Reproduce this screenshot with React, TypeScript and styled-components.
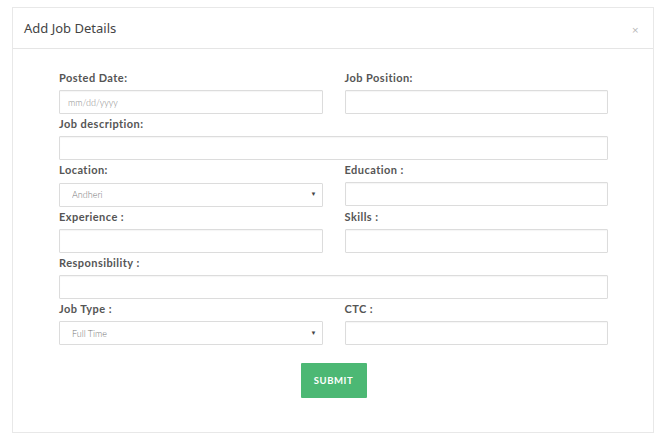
import React from 'react';
import styled, { createGlobalStyle } from 'styled-components';

const GlobalStyle = createGlobalStyle`
  body {
    margin: 0;
    background: #ffffff;
    font-family: 'Lato', 'Open Sans', sans-serif;
  }
`;

type Field = {
  label: string;
  kind?: 'text' | 'select';
  placeholder?: string;
  value?: string;
  wide?: boolean;
};

const fields: Field[] = [
  { label: 'Posted Date:', placeholder: 'mm/dd/yyyy' },
  { label: 'Job Position:' },
  { label: 'Job description:', wide: true },
  { label: 'Location:', kind: 'select', value: 'Andheri' },
  { label: 'Education :' },
  { label: 'Experience :' },
  { label: 'Skills :' },
  { label: 'Responsibility :', wide: true },
  { label: 'Job Type :', kind: 'select', value: 'Full Time' },
  { label: 'CTC :' },
];

function App() {
  return (
    <>
      <GlobalStyle />
      <Modal>
        <Header>
          <Title>Add Job Details</Title>
          <Close>×</Close>
        </Header>
        <Body>
          <Grid>
            {fields.map((f) => (
              <FieldBox key={f.label} wide={f.wide}>
                <Label>{f.label}</Label>
                {f.kind === 'select' ? (
                  <SelectWrap>
                    <Select defaultValue={f.value}>
                      <option>{f.value}</option>
                    </Select>
                    <Arrow>▼</Arrow>
                  </SelectWrap>
                ) : (
                  <Input type="text" placeholder={f.placeholder} />
                )}
              </FieldBox>
            ))}
          </Grid>
          <Actions>
            <SubmitButton type="button">SUBMIT</SubmitButton>
          </Actions>
        </Body>
      </Modal>
    </>
  );
}

const Modal = styled.div`
  margin: 7px 0 0 12px;
  width: 642px;
  border: 1px solid #e8e8e8;
  box-sizing: border-box;
  background: #fff;
`;

const Header = styled.div`
  height: 40px;
  display: flex;
  align-items: center;
  justify-content: space-between;
  padding: 0 14px 0 11px;
  border-bottom: 1px solid #e5e5e5;
`;

const Title = styled.h4`
  margin: 0;
  font-family: 'Noto Sans', 'Open Sans', sans-serif;
  font-size: 13px;
  font-weight: 400;
  color: #444;
`;

const Close = styled.span`
  font-family: 'DejaVu Sans', sans-serif;
  font-size: 9px;
  color: #b5b5b5;
  margin-top: 4px;
`;

const Body = styled.div`
  padding: 19px 45px 34px 46px;
`;

const Grid = styled.div`
  display: grid;
  grid-template-columns: 1fr 1fr;
  column-gap: 22px;
`;

const FieldBox = styled.div<{ wide?: boolean }>`
  grid-column: ${(p) => (p.wide ? '1 / span 2' : 'auto')};
  display: flex;
  flex-direction: column;
`;

const Label = styled.label`
  padding-top: 3px;
  margin-bottom: 5px;
  line-height: 14px;
  font-size: 11px;
  font-weight: 700;
  letter-spacing: 0.45px;
  color: #555;
`;

const Input = styled.input`
  box-sizing: border-box;
  height: 24px;
  width: 100%;
  border: 1px solid #dcdcdc;
  border-radius: 1px;
  box-shadow: inset 0 1px 1px rgba(0, 0, 0, 0.04);
  padding: 0 8px;
  font-family: 'Lato', sans-serif;
  font-size: 9px;
  font-weight: 300;
  color: #777;
  outline: none;

  &::placeholder {
    color: #888;
  }
`;

const SelectWrap = styled.div`
  position: relative;
`;

const Select = styled.select`
  box-sizing: border-box;
  height: 24px;
  width: 100%;
  appearance: none;
  background: #fff;
  border: 1px solid #dcdcdc;
  border-radius: 1px;
  padding: 0 12px;
  font-family: 'Lato', sans-serif;
  font-size: 9px;
  font-weight: 300;
  color: #777;
  outline: none;
`;

const Arrow = styled.span`
  position: absolute;
  right: 6px;
  top: 8px;
  font-size: 6px;
  color: #444;
  pointer-events: none;
`;

const Actions = styled.div`
  display: flex;
  justify-content: center;
  margin-top: 18px;
`;

const SubmitButton = styled.button`
  width: 66px;
  height: 35px;
  border: none;
  border-radius: 1px;
  background: #4cb874;
  color: #fff;
  font-family: 'Lato', sans-serif;
  font-size: 9.5px;
  font-weight: 700;
  letter-spacing: 0.6px;
  cursor: pointer;
`;

export default App;
